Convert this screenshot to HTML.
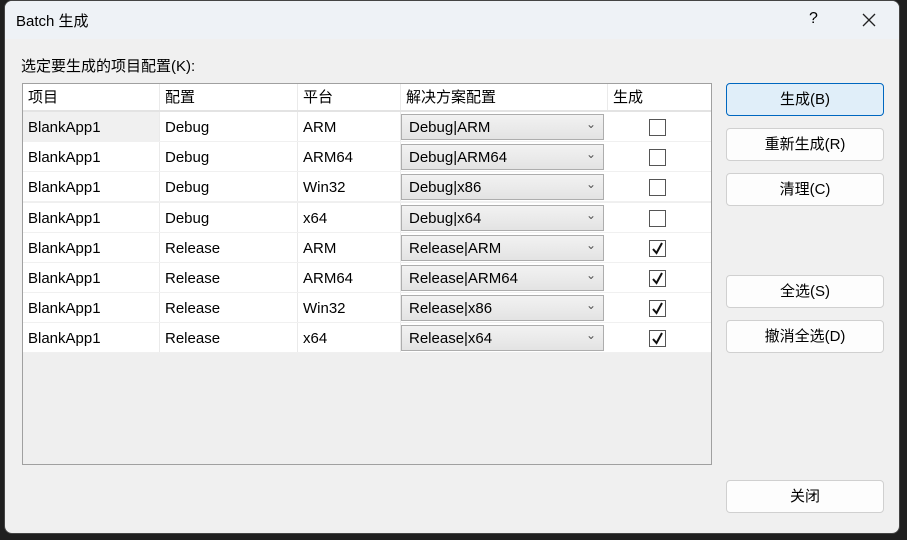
<!DOCTYPE html>
<html><head><meta charset="utf-8"><style>
*{box-sizing:border-box;margin:0;padding:0}
body{width:907px;height:540px;background:#1f1f1f;position:relative;overflow:hidden;font-family:"Liberation Sans","Noto Sans CJK SC",sans-serif;font-size:15px;color:#000}
.dlg{position:absolute;left:4px;top:0;width:896px;height:534px;background:#f0f0f0;border-radius:8px;overflow:hidden;border:1px solid #444}
.title{position:absolute;left:0;top:0;width:100%;height:38px;background:#eef2f6}
.t{position:absolute;white-space:nowrap}
.tbl{position:absolute;left:17px;top:82px;width:690px;height:382px;border:1px solid #a0a0a0;background:#efefef}
.hdr{position:absolute;left:0;top:0;width:688px;height:28px;background:#fff;border-bottom:2px solid #e3e3e3}
.row{position:absolute;left:0;width:688px;height:30px;background:#fff;border-bottom:1px solid #f0f0f0}
.c{position:absolute;top:0;height:100%;border-right:1px solid #eaeaea;padding-left:5px;line-height:32px}
.dd{position:absolute;left:378px;top:2px;width:203px;height:26px;background:linear-gradient(#f2f2f2,#e3e3e3);border:1px solid #adadad;line-height:26px;padding-left:7px}
.dd:after{content:"⌄";position:absolute;right:7px;top:-4px;font-size:12px;color:#555}
.cb{position:absolute;left:626px;top:7px;width:17px;height:17px;border:1px solid #555;background:#fff}
.btn{position:absolute;left:721px;width:158px;height:33px;background:#fdfdfd;border:1px solid #d0d0d0;border-radius:4px;text-align:center;line-height:31px}
</style></head><body>
<div class="dlg">
<div class="title"><span class="t" style="left:11px;top:9px;font-size:15px">Batch 生成</span>
<span class="t" style="left:804px;top:9px;font-size:16px">?</span>
<svg style="position:absolute;left:857px;top:12px" width="14" height="14"><path d="M1 1L13 13M13 1L1 13" stroke="#222" stroke-width="1.3"/></svg></div>
<span class="t" style="left:16px;top:54px">选定要生成的项目配置(K):</span>
<div class="tbl">
<div class="hdr">
<div class="c" style="left:0;width:137px;line-height:28px">项目</div>
<div class="c" style="left:137px;width:138px;line-height:28px">配置</div>
<div class="c" style="left:275px;width:103px;line-height:28px">平台</div>
<div class="c" style="left:378px;width:207px;line-height:28px">解决方案配置</div>
<div class="c" style="left:585px;width:103px;line-height:28px;border:none">生成</div>
</div>
<div id="rows"></div>
</div>
<div class="btn" style="top:82px;background:#e0eef9;border-color:#0067c0">生成(B)</div>
<div class="btn" style="top:127px">重新生成(R)</div>
<div class="btn" style="top:172px">清理(C)</div>
<div class="btn" style="top:274px">全选(S)</div>
<div class="btn" style="top:319px">撤消全选(D)</div>
<div class="btn" style="top:479px">关闭</div>
</div>
<script>
var d=[["Debug","ARM",0],["Debug","ARM64",0],["Debug","Win32",0,"x86"],["Debug","x64",0],["Release","ARM",1],["Release","ARM64",1],["Release","Win32",1,"x86"],["Release","x64",1]];
var h="";d.forEach(function(r,i){var p=r[3]||r[1];h+='<div class="row" style="top:'+(28+i*30.2)+'px"><div class="c" style="left:0;width:137px;'+(i==0?'background:#f0f0f0':'')+'">BlankApp1</div><div class="c" style="left:137px;width:138px">'+r[0]+'</div><div class="c" style="left:275px;width:103px">'+r[1]+'</div><div class="dd">'+r[0]+'|'+p+'</div><div class="cb">'+(r[2]?'<svg width="15" height="15" style="position:absolute;left:0;top:0"><path d="M3 8L6.5 12L12 2" stroke="#111" stroke-width="2" fill="none"/></svg>':'')+'</div></div>';});
document.getElementById("rows").innerHTML=h;
</script>
</body></html>
